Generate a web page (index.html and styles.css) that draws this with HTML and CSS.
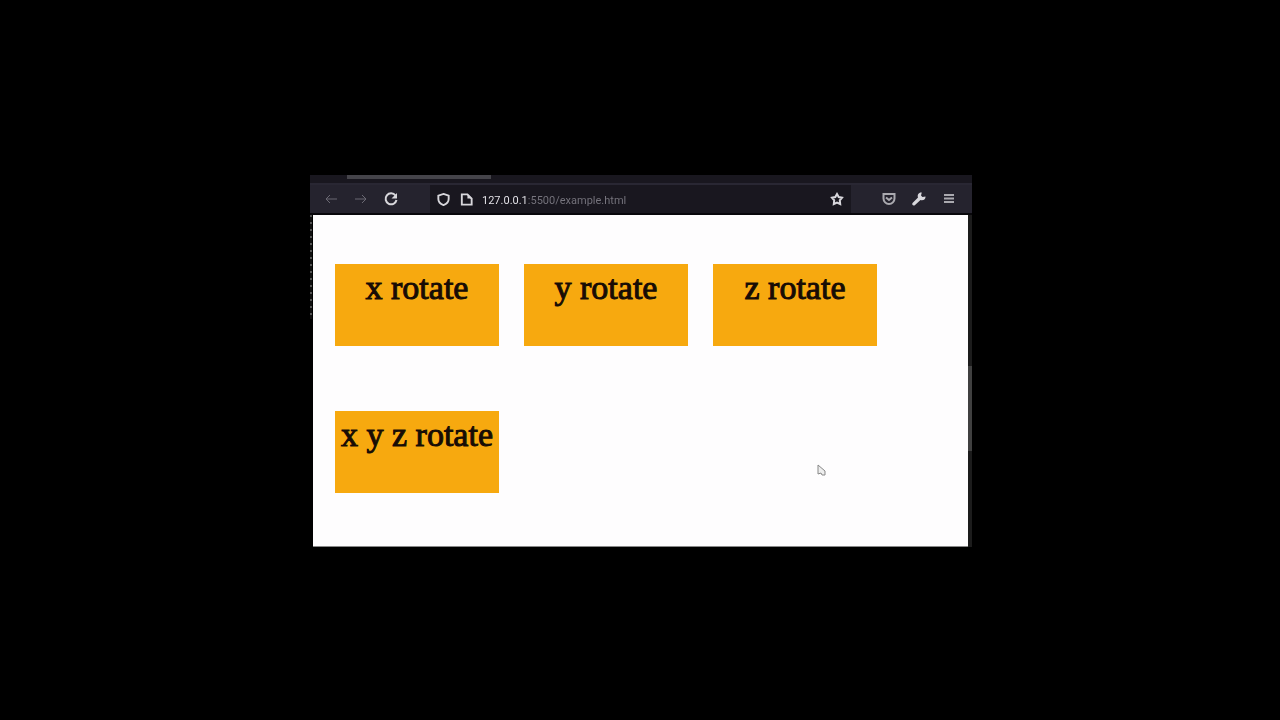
FILE: index.html
```html
<!DOCTYPE html>
<html lang="en">
<head>
    <meta charset="UTF-8">
    <meta name="viewport" content="width=device-width, initial-scale=1.0">
    <title>Rotate</title>
    <link rel="stylesheet" href="styles.css">
</head>
<body>
    <div class="window">
        <div class="tabs">
            <div class="active-tab"></div>
        </div>
        <div class="toolbar">
            <div class="nav">
                <button class="icon dim" aria-label="Back">
                    <svg viewBox="0 0 16 16"><path d="M14 8H3M7 4L3 8l4 4"/></svg>
                </button>
                <button class="icon dim" aria-label="Forward">
                    <svg viewBox="0 0 16 16"><path d="M2 8h11M9 4l4 4-4 4"/></svg>
                </button>
                <button class="icon" aria-label="Reload">
                    <svg viewBox="0 0 16 16"><path d="M12.500 4.500A5.500 5.500 0 1 0 13.500 9"/><path class="fill" d="M14 2v5.500H8.500z"/></svg>
                </button>
            </div>
            <div class="address">
                <svg class="small" viewBox="0 0 16 16"><path d="M8 2l5.500 1.800v3.700c0 3.200-2.500 5.400-5.500 6.500-3-1.100-5.500-3.300-5.500-6.500V3.800z"/></svg>
                <svg class="small" viewBox="0 0 16 16"><path d="M3 2.500h6l4.500 4.500v6.500H3z"/><path class="fill" d="M9 2v5h5z"/></svg>
                <input class="url" type="text" aria-label="Address" value="127.0.0.1:5500/example.html">
                <button class="icon" aria-label="Bookmark">
                    <svg viewBox="0 0 16 16"><path d="M8 3l1.700 3 3.300.7-2.200 2.600.4 3.700L8 11.500 4.800 13l.4-3.700L3 6.700 6.300 6z"/></svg>
                </button>
            </div>
            <div class="tools">
                <button class="icon soft" aria-label="Save to Pocket">
                    <svg viewBox="0 0 16 16"><path d="M2.500 3h11v4.500a5.500 5.500 0 0 1-11 0zM5 6.500l3 2.500 3-2.500"/></svg>
                </button>
                <button class="icon" aria-label="Developer tools">
                    <svg viewBox="0 0 16 16"><path class="fill" d="M14.500 5.500l-3 .5-1.500-1.500.8-3C8 1 6 3.500 7 6.500L1.500 12c-1 1.500.8 3.300 2.300 2.200L9.500 9c3 .8 5.300-1 5-3.500z"/></svg>
                </button>
                <button class="icon soft" aria-label="Menu">
                    <svg viewBox="0 0 16 16"><path d="M3 4h10M3 7.500h10M3 11h10"/></svg>
                </button>
            </div>
        </div>
        <div class="view">
            <div class="edge"></div>
            <main class="page">
                <div class="box">x rotate</div>
                <div class="box">y rotate</div>
                <div class="box">z rotate</div>
                <div class="box">x y z rotate</div>
                <svg class="cursor" viewBox="0 0 10 14"><path d="M1 2v9l3-1 1 2h3V8z"/></svg>
            </main>
            <div class="scrollbar">
                <div class="thumb"></div>
            </div>
        </div>
    </div>
</body>
</html>
```
FILE: styles.css
```css
* {
    box-sizing: border-box;
}
body {
    margin: 0;
    padding: 2px 0 0 2px;
    min-height: 100vh;
    display: flex;
    align-items: center;
    justify-content: center;
    background-color: #000;
}
.window {
    width: 100%;
    max-width: 662px;
}
.tabs {
    height: 8px;
    padding-left: 37px;
    background-color: #19171f;
}
.active-tab {
    width: 23%;
    height: 4px;
    background-color: #45444a;
}
.toolbar {
    display: flex;
    height: 32px;
    background-color: #25232e;
    border-top: 2px solid #292733;
    border-bottom: 2px solid #08070b;
}
.nav {
    display: flex;
    align-items: center;
    gap: 14px;
    width: 120px;
    padding-left: 13px;
}
.icon {
    display: flex;
    width: 16px;
    height: 16px;
    padding: 0;
    border: 0;
    background: none;
    color: #d8d7dc;
}
.dim {
    color: #6b6973;
}
.soft {
    color: #aaa9af;
}
svg {
    width: 100%;
    height: 100%;
    fill: none;
    stroke: currentColor;
    stroke-width: 2;
}
.dim svg {
    stroke-width: 1;
}
.fill {
    fill: currentColor;
    stroke: none;
}
.address {
    display: flex;
    flex: 1;
    align-items: center;
    gap: 8px;
    padding: 0 6px;
    background-color: #19171f;
    color: #d8d7dc;
}
.small {
    flex: none;
    width: 15px;
    height: 15px;
}
.url {
    flex: 1;
    min-width: 0;
    padding: 2px 0 0;
    border: 0;
    outline: 0;
    font: 11px Roboto, sans-serif;
    color: transparent;
    background: linear-gradient(90deg, #f0eff4 44px, #77757e 44px);
    -webkit-background-clip: text;
    background-clip: text;
}
.tools {
    display: flex;
    align-items: center;
    gap: 14px;
    padding: 0 15px 0 30px;
}
.view {
    display: flex;
}
.edge {
    width: 3px;
    background: repeating-linear-gradient(#555 0 2px, #111 2px 7px) no-repeat 0 0 / 2px 104px;
}
.page {
    position: relative;
    display: flex;
    flex: 1;
    flex-wrap: wrap;
    gap: 65px 25px;
    padding: 49px 22px 53px;
    background-color: #fefdfe;
    border-bottom: 1px solid #888;
}
.box {
    width: 164px;
    height: 82px;
    padding-top: 4px;
    background-color: #f7a90f;
    color: #170c05;
    font: 34px/40px "Liberation Serif", serif;
    -webkit-text-stroke: 1px #170c05;
    text-align: center;
    white-space: nowrap;
}
.cursor {
    position: absolute;
    top: 75%;
    left: 77%;
    width: 10px;
    height: 14px;
    fill: #eee;
    stroke: #888;
    stroke-width: 1;
}
.scrollbar {
    width: 4px;
    padding-top: 151px;
    background-color: #1c1c1c;
}
.thumb {
    height: 85px;
    background-color: #404040;
}
```
